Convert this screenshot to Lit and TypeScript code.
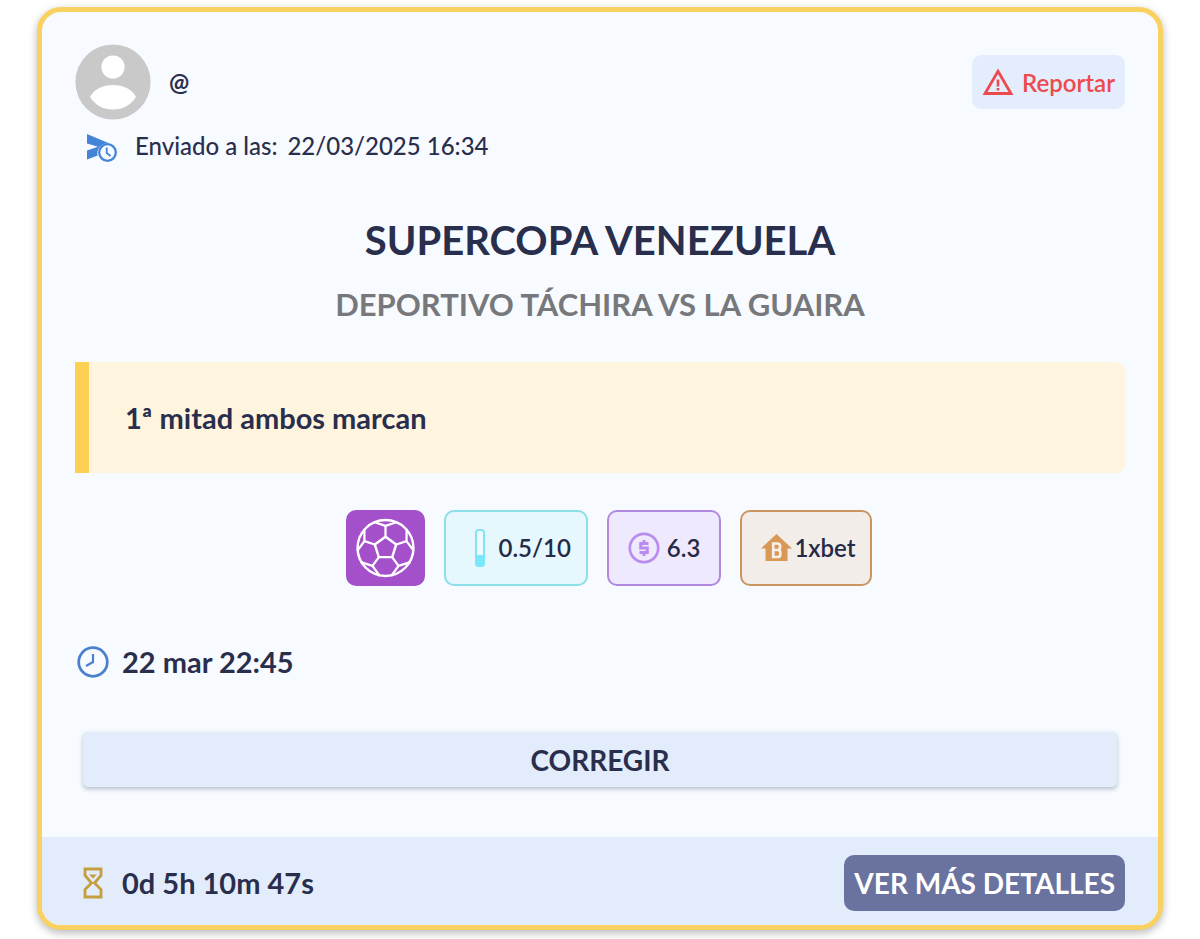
import { LitElement, html, css, svg } from "lit";
import { customElement, property } from "lit/decorators.js";

const ballSpokes = [0, 72, 144, 216, 288];

@customElement("pick-chip")
class PickChip extends LitElement {
  @property({ reflect: true }) tone = "stake";

  static styles = css`
    :host {
      display: flex;
      align-items: center;
      box-sizing: border-box;
      height: 76px;
      padding: 0 18px;
      border: 2px solid;
      border-radius: 10px;
      font-size: 24px;
      line-height: 32px;
      font-weight: 600;
    }
    :host([tone="sport"]) {
      padding: 0 8px;
      background: #a450cb;
      border-color: #a450cb;
    }
    :host([tone="stake"]) {
      gap: 13px;
      padding: 0 15px 0 29px;
      background: #e6f8fe;
      border-color: #8bdfe8;
    }
    :host([tone="odds"]) {
      gap: 7px;
      padding: 0 19px;
      background: #efe9fd;
      border-color: #b187e2;
    }
    :host([tone="house"]) {
      gap: 2px;
      padding: 0 14px 0 19px;
      background: #f2ede9;
      border-color: #cc9460;
    }
    .text {
      color: #252a47;
    }
  `;

  render() {
    return html`<slot name="icon"></slot><span class="text"><slot></slot></span>`;
  }
}

@customElement("app-root")
class AppRoot extends LitElement {
  static properties = {
    sentAt: { type: String },
    remaining: { type: String },
  };

  static styles = css`
    :host {
      display: block;
      padding: 7px 37px 9px;
      background: #fff;
      color: #2a2e4d;
      font-family: Lato, "Open Sans", sans-serif;
    }
    svg {
      display: block;
      flex: none;
    }
    button {
      font: inherit;
      color: inherit;
      border: 0;
      margin: 0;
      cursor: pointer;
    }
    h1, h2, p {
      margin: 0;
    }
    .card {
      border: 5px solid #f9d160;
      border-radius: 24px;
      background: #f7fbff;
      box-shadow: 0 3px 8px rgba(0, 0, 0, 0.28);
      overflow: hidden;
    }
    .body {
      padding: 32px 33px 50px;
    }
    .head, .user, .sent, .row, .chips, .foot {
      display: flex;
      align-items: center;
    }
    .head, .foot {
      justify-content: space-between;
    }
    .user {
      gap: 18px;
      font-size: 24px;
      line-height: 32px;
      font-weight: 700;
    }
    .report {
      display: flex;
      align-items: center;
      gap: 8px;
      height: 54px;
      padding: 0 10px;
      border-radius: 9px;
      background: #e3edfb;
      color: #ed4a50;
      font-size: 24px;
      font-weight: 600;
    }
    .sent {
      align-items: flex-end;
      gap: 10px;
      margin-top: 10px;
      padding-left: 12px;
      font-size: 24px;
      line-height: 32px;
      font-weight: 500;
    }
    .sent svg {
      margin-right: 8px;
    }
    .title {
      margin-top: 54px;
      text-align: center;
      font-size: 40px;
      line-height: 48px;
      font-weight: 700;
    }
    .match {
      margin-top: 20px;
      text-align: center;
      font-size: 31px;
      line-height: 40px;
      font-weight: 700;
      color: #77787b;
    }
    .pick {
      margin-top: 38px;
      padding: 36px;
      border-left: 14px solid #fdd055;
      border-radius: 0 9px 9px 0;
      background: #fff4dd;
      font-size: 29px;
      line-height: 39px;
      font-weight: 700;
    }
    .chips {
      flex-wrap: wrap;
      justify-content: center;
      gap: 19px;
      margin-top: 37px;
      padding-left: 18px;
    }
    .row {
      gap: 13px;
      font-size: 29px;
      line-height: 36px;
      font-weight: 700;
    }
    .kickoff {
      margin-top: 58px;
      padding-left: 2px;
    }
    .fix {
      display: block;
      width: calc(100% - 16px);
      height: 55px;
      margin: 52px 8px 0;
      border-radius: 5px;
      background: #e3ecfb;
      box-shadow: 0 2px 4px rgba(30, 40, 70, 0.3);
      font-size: 28px;
      font-weight: 700;
    }
    .foot {
      padding: 18px 33px 14px 35px;
      background: #e3ecfb;
    }
    .more {
      height: 56px;
      padding: 0 10px;
      border-radius: 10px;
      background: #6a739f;
      color: #fff;
      font-size: 28px;
      font-weight: 700;
    }
  `;

  declare sentAt: string;
  declare remaining: string;

  constructor() {
    super();
    this.sentAt = "22/03/2025 16:34";
    this.remaining = "0d 5h 10m 47s";
  }

  private ball() {
    return html`<svg slot="icon" width="59" height="60" viewBox="-30 -30 60 60" fill="none" stroke="#fff" stroke-width="2.5" stroke-linejoin="round" stroke-linecap="round" aria-label="Fútbol">
      <circle r="28.4" />
      <path d="M0-11.5 10.9-3.6 6.8 9.3H-6.8L-10.9-3.6Z" />
      ${ballSpokes.map(
        (a) => svg`<path transform="rotate(${a})" d="M0-11.5V-22.5M-11.1-26.2 0-22.5 11.1-26.2" stroke-width="2.3" />`
      )}
    </svg>`;
  }

  render() {
    return html`
      <article class="card">
        <div class="body">
          <header class="head">
            <div class="user">
              <svg width="76" height="76" viewBox="0 0 76 76" aria-hidden="true">
                <circle cx="38" cy="38" r="37.6" fill="#c9c9c9" />
                <circle cx="38" cy="23" r="11.6" fill="#fff" />
                <path d="M15 53C19 45 28 41 38 41S57 45 61 53C56 61 48 65.500 38 65.500S20 61 15 53Z" fill="#fff" />
              </svg>
              <span>@</span>
            </div>
            <button class="report" type="button">
              <svg width="32" height="28" viewBox="0 0 32 28" aria-hidden="true">
                <path d="M16 3.200 29 25.500H3Z" fill="none" stroke="currentColor" stroke-width="2.800" />
                <path d="M14.700 11.500H17.300V18.500H14.700ZM14.700 20H17.300V22.600H14.700Z" fill="currentColor" />
              </svg>
              <span>Reportar</span>
            </button>
          </header>
          <p class="sent">
            <svg width="30" height="28" viewBox="0 0 30 28" aria-hidden="true">
              <path d="M0 0 22 9.200C16 9 11.500 12.500 10.500 17.500 10.200 19.500 10.400 21 10.800 21.500L0 25.500V16.500L11 12.800 0 9.500Z" fill="#4484d8" />
              <circle cx="20.500" cy="18.500" r="8.300" fill="#f7fbff" stroke="#4484d8" stroke-width="2.300" />
              <path d="M19.700 13.500V19L23.500 22" fill="none" stroke="#4484d8" stroke-width="1.800" />
            </svg>
            <span>Enviado a las:</span>
            <span>${this.sentAt}</span>
          </p>
          <h1 class="title">SUPERCOPA VENEZUELA</h1>
          <h2 class="match">DEPORTIVO TÁCHIRA VS LA GUAIRA</h2>
          <p class="pick">1ª mitad ambos marcan</p>
          <div class="chips">
            <pick-chip tone="sport">${this.ball()}</pick-chip>
            <pick-chip tone="stake">
              <svg slot="icon" width="10" height="38" viewBox="0 0 10 38" aria-hidden="true">
                <rect x="1" y="1" width="8" height="36" rx="2.500" fill="#eefbff" stroke="#84e2f2" stroke-width="2" />
                <path d="M0 26H10V34Q10 38 5 38T0 34Z" fill="#7ce6fa" />
              </svg>0.5/10</pick-chip>
            <pick-chip tone="odds">
              <svg slot="icon" width="32" height="32" viewBox="0 0 32 32" fill="none" stroke="#b98df0" aria-hidden="true">
                <circle cx="16" cy="16" r="14.200" stroke-width="2.700" />
                <path d="M20.500 11.500H12.700V15.900H19.300V20.500H11.500M16 8V11.500M16 20.500V24" stroke-width="3" />
              </svg>6.3</pick-chip>
            <pick-chip tone="house">
              <svg slot="icon" width="31" height="28" viewBox="0 0 31 28" aria-hidden="true">
                <path d="M15.500 0 31 14.500H26.500V27H4.500V14.500H0Z" fill="#da9857" />
                <path d="M12.200 9.500H16.500Q19 9.500 19 12V13.500Q19 16 16.700 16 19.300 16 19.300 18.500V20.500Q19.300 23 16.800 23H12.200ZM12.200 16H16.700" fill="none" stroke="#f7f0ea" stroke-width="2.700" />
              </svg>1xbet</pick-chip>
          </div>
          <p class="row kickoff">
            <svg width="32" height="32" viewBox="0 0 32 32" fill="none" stroke="#4c80cf" aria-hidden="true">
              <circle cx="16" cy="16" r="14.300" stroke-width="2.800" />
              <path d="M16 8V16L9 20" stroke-width="2.200" />
            </svg>
            <span>22 mar 22:45</span>
          </p>
          <button class="fix" type="button">CORREGIR</button>
        </div>
        <footer class="foot">
          <div class="row">
            <svg width="32" height="32" viewBox="0 0 32 32" fill="none" stroke="#c59e3d" aria-hidden="true">
              <path d="M8 2H24V8.500L17.500 16 24 22.500V30H8V22.500L14.500 16 8 8.500Z" stroke-width="2.800" />
              <path d="M12 7.500H20L16 11.500Z" fill="#c59e3d" stroke="none" />
            </svg>
            <span>${this.remaining}</span>
          </div>
          <button class="more" type="button">VER MÁS DETALLES</button>
        </footer>
      </article>
    `;
  }
}
